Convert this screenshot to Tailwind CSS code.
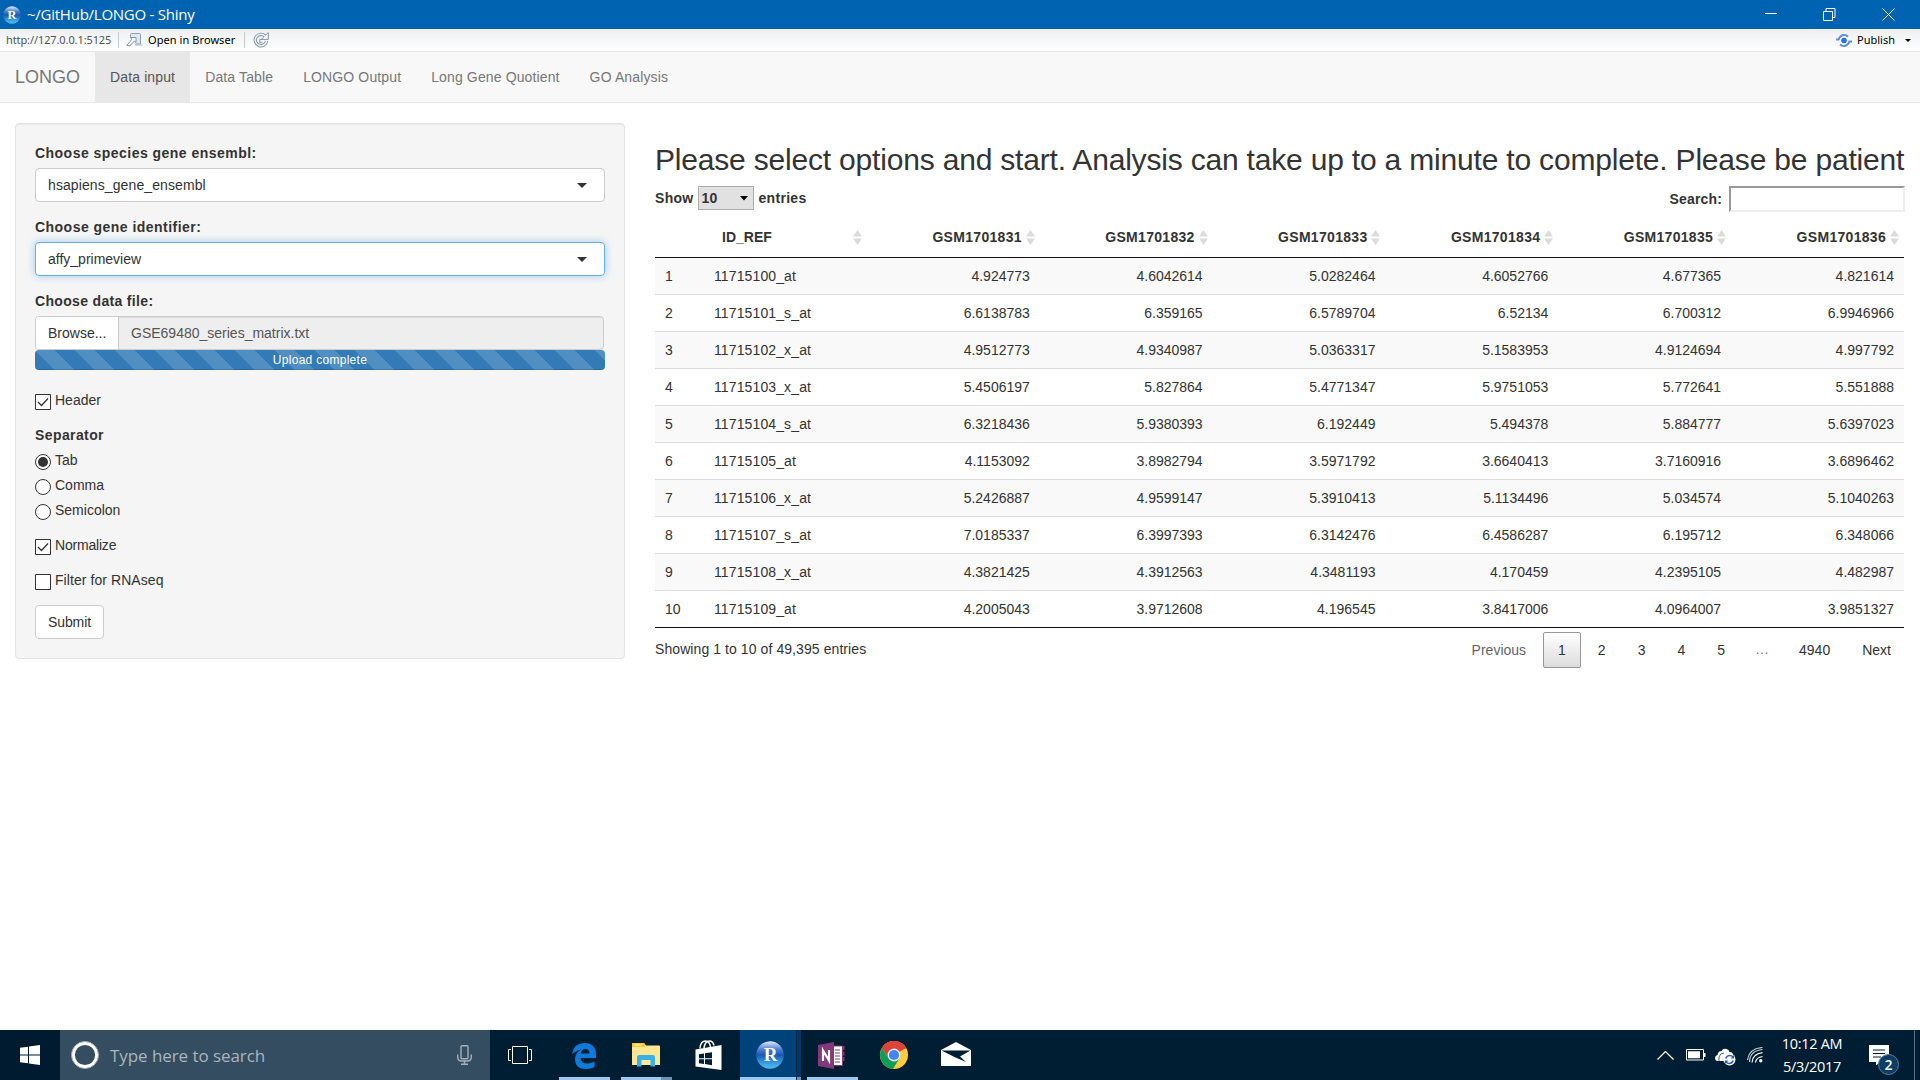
<!DOCTYPE html>
<html lang="en">
<head>
<meta charset="utf-8">
<title>~/GitHub/LONGO - Shiny</title>
<script src="https://cdn.jsdelivr.net/npm/@tailwindcss/browser@4"></script>
</head>
<body class="flex h-screen w-screen flex-col overflow-hidden bg-white font-['Liberation_Sans',Arial,sans-serif] text-sm leading-5 text-[#333]">

<!-- Window title bar -->
<header class="flex h-[29px] shrink-0 items-center bg-[#0063b1] pl-[3px] text-white">
  <svg class="mr-[6px] shrink-0" width="18" height="18" viewBox="0 0 28 28">
    <defs>
      <linearGradient id="ball" x1="0" y1="0" x2="0" y2="1"><stop offset="0" stop-color="#e4ecfa"/><stop offset=".3" stop-color="#4a7fd0"/><stop offset=".5" stop-color="#1a58b4"/><stop offset=".8" stop-color="#3a9fe0"/><stop offset="1" stop-color="#4fc0ee"/></linearGradient>
    </defs>
    <circle cx="14" cy="14" r="13.5" fill="url(#ball)"/>
    <text x="14" y="20.5" text-anchor="middle" font-family="Liberation Serif" font-size="19" font-weight="bold" fill="#fff">R</text>
  </svg>
  <span class="pb-0.5 font-['Open_Sans',sans-serif] text-[15px] tracking-[-0.25px]">~/GitHub/LONGO - Shiny</span>
  <svg class="mr-[25px] ml-auto" width="130" height="13" viewBox="0 0 130 13" fill="none" stroke="#fff">
    <path d="M0 5.500h12M58.500 3.500h9v9h-9zM61 3V.5h9v9h-2.500M117.500.5l12 12M129.500.5l-12 12"/>
  </svg>
</header>

<!-- Viewer toolbar -->
<div class="flex h-[22px] shrink-0 items-center bg-linear-to-b from-[#eeeff2] to-white pl-1.5 font-['Noto_Sans',sans-serif] text-[11px] text-black">
  <span class="w-[104px] text-[11px] tracking-[-0.1px] whitespace-nowrap text-[#555]">http://127.0.0.1:5125</span>
  <i class="ml-2 h-4 w-px bg-[#c9cacc]"></i>
  <svg class="ml-[7px]" width="17" height="14" viewBox="0 0 17 14">
    <path d="M4.500 5V1.500q0-1 1-1h8q1 0 1 1v9.500h-5" fill="#dfe9f4" stroke="#8b9db5"/>
    <path d="M9 11.500h7.500v1H9z" fill="#a9b6c8"/>
    <path d="M5 4.500h5v5L8.300 8l-4.600 5L.8 12.300 5.600 6.700z" fill="#fff" stroke="#8192aa" stroke-linejoin="round"/>
  </svg>
  <span class="ml-[5px] w-[88px] tracking-[0.07px] whitespace-nowrap">Open in Browser</span>
  <i class="ml-2 h-4 w-px bg-[#c9cacc]"></i>
  <svg class="ml-2" width="16" height="16" viewBox="0 0 16 16" fill="none">
    <path d="M12.200 4.200A5.700 5.700 0 1 0 13.600 9" stroke="#8492a8" stroke-width="3.400"/>
    <path d="M15.300 .6v6.800H8.200z" fill="#fff" stroke="#8492a8"/>
    <path d="M12.200 4.200A5.700 5.700 0 1 0 13.600 9" stroke="#eef1f5" stroke-width="1.500"/>
    <path d="M9.500 7.500H6.800v3.200h2.700" stroke="#8492a8"/>
  </svg>
  <svg class="ml-auto" width="16" height="13" viewBox="0 0 16 13" fill="none" stroke="#5c8fd6" stroke-width="2">
    <path d="M0 5.500h2.500Q4.500 1 8 1q2.500 0 4 1.500M16 7.500h-2.500Q11.500 12 8 12q-2.500 0-4-1.500"/>
    <circle cx="8" cy="6.500" r="2.800" fill="#2273e6" stroke="none"/>
  </svg>
  <span class="ml-[5px] w-[38px]">Publish</span>
  <svg class="mr-[9px] ml-[10px]" width="6" height="3" viewBox="0 0 6 3"><path d="M0 0h6L3 3z"/></svg>
</div>

<!-- Navigation bar -->
<nav class="flex h-[52px] shrink-0 border-y border-[#e7e7e7] bg-[#f8f8f8] leading-[50px] tracking-[0.13px] text-[#777]">
  <a class="px-[15px] text-lg leading-[50px] tracking-normal">LONGO</a>
  <a class="bg-[#e7e7e7] px-[15px] text-[#555]">Data input</a>
  <a class="px-[15px]">Data Table</a>
  <a class="px-[15px]">LONGO Output</a>
  <a class="px-[15px]">Long Gene Quotient</a>
  <a class="px-[15px]">GO Analysis</a>
</nav>

<main class="flex min-h-0 flex-1 items-start px-[15px] pt-5">
  <!-- Options panel -->
  <form class="mr-[30px] w-[610px] shrink-0 rounded border border-[#e3e3e3] bg-[#f5f5f5] p-[19px] shadow-[inset_0_1px_1px_rgba(0,0,0,0.05)]">
    <label class="block font-bold tracking-[0.47px]">Choose species gene ensembl:</label>
    <div class="mt-[5px] flex h-[34px] items-center justify-between rounded border border-[#ccc] bg-white pr-[17px] pl-3 tracking-[0.1px]">
      hsapiens_gene_ensembl <svg width="10" height="5" viewBox="0 0 10 5" fill="#333"><path d="M0 0h10L5 5z"/></svg>
    </div>
    <label class="mt-[15px] block font-bold tracking-[0.47px]">Choose gene identifier:</label>
    <div class="mt-[5px] flex h-[34px] items-center justify-between rounded border border-[#66afe9] bg-white pr-[17px] pl-3 shadow-[0_0_8px_rgba(102,175,233,0.6)]">
      affy_primeview <svg width="10" height="5" viewBox="0 0 10 5" fill="#333"><path d="M0 0h10L5 5z"/></svg>
    </div>
    <label class="mt-[15px] block font-bold tracking-[0.33px]">Choose data file:</label>
    <div class="mt-[5px] mr-px flex h-[34px] overflow-hidden rounded border border-[#ccc] bg-[#eee] leading-8">
      <span class="w-[83px] border-r border-[#ccc] bg-white pl-3">Browse...</span>
      <span class="flex-1 pl-3 text-[#555] shadow-[inset_0_1px_1px_rgba(0,0,0,0.075)]">GSE69480_series_matrix.txt</span>
    </div>
    <div class="h-5 rounded bg-[#337ab7] bg-[linear-gradient(45deg,rgba(255,255,255,.15)_25%,transparent_25%,transparent_50%,rgba(255,255,255,.15)_50%,rgba(255,255,255,.15)_75%,transparent_75%,transparent)] bg-[length:40px_40px] text-center text-xs leading-5 tracking-[0.28px] text-white shadow-[inset_0_-1px_0_rgba(0,0,0,0.15)]">Upload complete</div>

    <div class="mt-5 flex h-5 gap-1">
      <svg class="mt-1" width="16" height="16"><path d="M.5.5h15v15H.5z" fill="#fff" stroke="#333"/><path d="M3 8l3.500 3.500L13 4.500" fill="none" stroke="#333" stroke-width="1.300"/></svg>Header
    </div>
    <div class="mt-[15px] font-bold tracking-[0.4px]">Separator</div>
    <div class="mt-[5px] flex flex-col gap-[5px]">
      <div class="flex h-5 gap-1"><svg class="mt-1" width="16" height="16"><circle cx="8" cy="8" r="7.500" fill="#fff" stroke="#333"/><circle cx="8" cy="8" r="5" fill="#333"/></svg>Tab</div>
      <div class="flex h-5 gap-1"><svg class="mt-1" width="16" height="16"><circle cx="8" cy="8" r="7.500" fill="#fff" stroke="#333"/></svg>Comma</div>
      <div class="flex h-5 gap-1"><svg class="mt-1" width="16" height="16"><circle cx="8" cy="8" r="7.500" fill="#fff" stroke="#333"/></svg>Semicolon</div>
    </div>
    <div class="mt-[15px] flex h-5 gap-1 tracking-[-0.2px]">
      <svg class="mt-1" width="16" height="16"><path d="M.5.5h15v15H.5z" fill="#fff" stroke="#333"/><path d="M3 8l3.500 3.500L13 4.500" fill="none" stroke="#333" stroke-width="1.300"/></svg>Normalize
    </div>
    <div class="mt-[15px] flex h-5 gap-1 tracking-[0.07px]">
      <svg class="mt-1" width="16" height="16"><path d="M.5.5h15v15H.5z" fill="#fff" stroke="#333"/></svg>Filter for RNAseq
    </div>
    <button type="button" class="mt-[15px] block h-[34px] w-[69px] rounded border border-[#ccc] bg-white pl-3 text-left tracking-[-0.1px]">Submit</button>
  </form>

  <!-- Results table -->
  <section class="w-[1250px] shrink-0">
    <h2 class="mt-5 mb-2.5 text-[30px] leading-[33px] tracking-[-0.19px] whitespace-nowrap">Please select options and start. Analysis can take up to a minute to complete. Please be patient</h2>
    <div class="flex h-[26px] items-start justify-between font-bold tracking-[0.3px]">
      <div class="flex items-center">
        Show
        <span class="mr-[5px] ml-1 flex h-6 w-14 items-center justify-between border border-[#adadad] bg-[#e1e1e1] pr-[5px] pl-[3px]">10
          <svg width="8" height="5" viewBox="0 0 8 5"><path d="M0 0h8L4 4.500z"/></svg></span>
        entries
      </div>
      <div class="flex items-center gap-[7px] tracking-[0.15px]">Search:
        <span class="h-[26px] w-[176px] border-2 border-t-[#999] border-r-[#eee] border-b-[#eee] border-l-[#999] bg-white"></span>
      </div>
    </div>
    <table class="w-[1249px] table-fixed border-separate border-spacing-0 border-b border-[#111]">
      <colgroup><col class="w-[49px]"><col class="w-[163px]"><col><col><col><col><col><col></colgroup>
      <thead><tr id="head" class="h-[46px] font-bold [&>th]:border-b [&>th]:border-[#111]"></tr></thead>
      <tbody id="rows"></tbody>
    </table>
    <div class="flex justify-between">
      <div class="pt-[11px] tracking-[0.08px]">Showing 1 to 10 of 49,395 entries</div>
      <div class="flex gap-0.5 pt-1 leading-[34px]">
        <span class="border border-transparent px-3.5 text-[#666]">Previous</span>
        <span class="rounded-[2px] border border-[#979797] bg-linear-to-b from-white to-[#dcdcdc] px-3.5">1</span>
        <span class="border border-transparent px-3.5">2</span>
        <span class="border border-transparent px-3.5">3</span>
        <span class="border border-transparent px-3.5">4</span>
        <span class="border border-transparent px-3.5">5</span>
        <span class="px-[13px] text-[#5f7a99]">…</span>
        <span class="border border-transparent px-3.5">4940</span>
        <span class="border border-transparent pr-[13px] pl-3.5">Next</span>
      </div>
    </div>
  </section>
</main>

<!-- Taskbar -->
<footer class="flex h-[50px] shrink-0 bg-[#001e33] font-['Open_Sans',sans-serif] text-white">
  <div class="flex w-[60px] items-center justify-center bg-[#001b2f]">
    <svg width="20" height="20" viewBox="0 0 20 20" fill="#fff"><path d="M0 2.800l8-1.100v7.700H0zM9 1.500L20 0v9.400H9zM0 10.500h8v7.800l-8-1.100zM9 10.500h11V20L9 18.500z"/></svg>
  </div>
  <div class="flex w-[430px] items-center bg-[#354d60] pl-[11px]">
    <svg width="28" height="28" viewBox="0 0 28 28"><circle cx="14" cy="14" r="11.800" fill="none" stroke="#fff" stroke-width="3.400"/><circle cx="14" cy="14" r="13.500" fill="none" stroke="#9aa7b1"/></svg>
    <span class="ml-[11px] pt-0.5 text-[17px] tracking-[-0.07px] text-[#aab5be]">Type here to search</span>
    <svg class="mr-[18px] ml-auto" width="15" height="20" viewBox="0 0 15 20" fill="none" stroke="#a4b0ba" stroke-width="1.400"><rect x="4" y=".7" width="7" height="13" rx="1"/><path d="M.7 9.500v2.500q0 4 4 4h5.600q4 0 4-4V9.500M7.500 16v3.300M4 19.300h7"/></svg>
  </div>
  <div class="flex w-[63px] items-center justify-center pr-[3px]">
    <svg width="24" height="19" viewBox="0 0 24 19" fill="none" stroke="#fff"><path d="M4.500.5h15v17h-15zM3 3.500H.5v11H3M21 3.500h2.500v11H21"/></svg>
  </div>
  <div class="flex w-[62px] flex-col items-center">
    <svg class="mt-3" width="26" height="27" viewBox="0 0 26 27"><path d="M1 12Q3 1 13.500 1 25 1 25 13v3H9.500q.5 5.500 7 5.500 4 0 7-2v5.500q-3.500 2-8.500 2Q4 27 4 17q0-6.500 6.500-9.500-5 .8-9.500 4.500zM9.800 11.500h8.700q0-4.500-4.200-4.500-3.800 0-4.500 4.500z" fill="#0e7ad9"/></svg>
    <i class="mt-auto h-[3px] w-[51px] bg-[#9cc8f0]"></i>
  </div>
  <div class="flex w-[62px] flex-col items-center">
    <svg class="mt-[13px]" width="28" height="24" viewBox="0 0 28 24"><path d="M0 1q0-1 1-1h11l2 2.500h13q1 0 1 1V22H0z" fill="#ffe793"/><path d="M0 1q0-1 1-1h11l1.500 2.500L12 4H0z" fill="#ffc928"/><path d="M2.500 1.500h7v1h-7z" fill="#fff"/><path d="M5 23.500V14q0-2 2-2h14q2 0 2 2v9.500h-4.500V17h-9v6.500z" fill="#3bb0e6"/></svg>
    <span class="mt-auto flex"><i class="h-[3px] w-10 bg-[#9cc8f0]"></i><i class="h-[3px] w-[11px] bg-[#7292b3]"></i></span>
  </div>
  <div class="flex w-[62px] flex-col items-center">
    <svg class="mt-[10px]" width="27" height="30" viewBox="0 0 27 30"><path d="M5 8.500Q5.500 1 10.500 1q4 0 5 6M9 8q1-7 5.500-7Q18 1 19 5.500" fill="none" stroke="#fff" stroke-width="1.500"/><path d="M.5 9.500L26.500 5v25L.5 26.500z" fill="#fff"/><path d="M4 14.300l5-.8v4.800H4zM10 13.300l7-1.100v6.100h-7zM4 19.200h5V24l-5-.7zM10 19.200h7v6l-7-1.100z" fill="#001e33"/></svg>
  </div>
  <div class="flex w-[62px] items-stretch pl-[1px]">
    <div class="flex w-[56px] flex-col items-center bg-[#00427a]">
      <svg class="mt-[11px] ml-[3px]" width="28" height="28" viewBox="0 0 28 28"><circle cx="14" cy="14" r="13.800" fill="url(#ball)"/><text x="14.500" y="20" text-anchor="middle" font-family="Liberation Serif" font-size="19" font-weight="bold" fill="#fff">R</text></svg>
      <i class="mt-auto h-[3px] w-full bg-[#9cc8f0]"></i>
    </div>
    <div class="flex w-[5px] flex-col justify-end border-l border-[#002544] bg-[#003764]"><i class="h-[3px] bg-[#7292b3]"></i></div>
  </div>
  <div class="flex w-[62px] flex-col items-center">
    <svg class="mt-[12px]" width="28" height="27" viewBox="0 0 28 27"><path d="M14 4h10.500v19.500H14z" fill="#fff" stroke="#80397b"/><path d="M17 8h5M17 11h5M17 14h5M17 17h5M17 20h5" stroke="#80397b"/><path d="M24 4h2.500v4H24zM24 9.500h2.500v4H24zM24 15h2.500v4H24z" fill="#80397b"/><path d="M0 3l16-3v27L0 24z" fill="#80397b"/><path d="M5 19V8.500l6 10V8" fill="none" stroke="#fff" stroke-width="2.200"/></svg>
    <i class="mt-auto h-[3px] w-[51px] bg-[#9cc8f0]"></i>
  </div>
  <div class="flex w-[62px] flex-col items-center">
    <svg class="mt-[11px]" width="28" height="28" viewBox="0 0 28 28"><circle cx="14" cy="14" r="14" fill="#ffcd40"/><path d="M14 14L1.900 7A14 14 0 0 1 26.100 7z" fill="#db4437"/><path d="M14 7.600h12.400A14 14 0 0 0 1.900 7L8.500 17.200z" fill="#db4437"/><path d="M1.900 7A14 14 0 0 0 13 28l6.500-10.800-11 0z" fill="#0f9d58"/><circle cx="14" cy="14" r="6.400" fill="#f1f1f1"/><circle cx="14" cy="14" r="5.100" fill="#4285f4"/></svg>
  </div>
  <div class="flex w-[62px] flex-col items-center">
    <svg class="mt-[12px]" width="30" height="24" viewBox="0 0 30 24"><path d="M0 8L15 0l15 8v16H0z" fill="#fff"/><path d="M.5 8.500h29L19 14.500l6 5.500-11.500-5z" fill="#001e33"/></svg>
  </div>

  <!-- System tray -->
  <div class="ml-auto flex items-center">
    <svg width="17" height="9" viewBox="0 0 17 9" fill="none" stroke="#fff" stroke-width="1.300"><path d="M.5 8.500l8-8 8 8"/></svg>
    <svg class="ml-[12px]" width="20" height="12" viewBox="0 0 20 12"><path d="M.5.5h17v10.500H.5z" fill="none" stroke="#fff"/><path d="M2 2.300h12v7H2zM18 4h1.500v4H18z" fill="#fff"/></svg>
    <svg class="mt-1 ml-[9px]" width="22" height="18" viewBox="0 0 22 18"><path d="M3 13q-3 0-3-3 0-2.500 2.500-3Q3 3 6.500 3 8 0 11.500 1q2.500.5 3 3 4 0 4 4.500V13z" fill="#fff"/><path d="M4 13V9q1-4 5-4" stroke="#001e33" fill="none" stroke-width=".7"/><circle cx="14.500" cy="11.500" r="6" fill="#fff"/><path d="M10.800 10.500q1-3 4-3 2 0 3.200 1.500M18.200 12.500q-1 3-4 3-2 0-3.200-1.500" stroke="#2a62c9" fill="none" stroke-width="1.500"/><path d="M19 7v3.500h-3.500zM10 16v-3.500h3.500z" fill="#2a62c9"/></svg>
    <svg class="ml-[10px]" width="17" height="16" viewBox="0 0 17 16" fill="none" stroke="#fff" stroke-width="1.200"><path d="M8.500 15.500Q9 10.500 15.500 9.500M5 15.500Q5.500 7 15.500 5.700" /><path d="M2.500 15Q2.500 4 15.500 2.500M.5 13Q2 1.500 15.500.5" stroke="#c4ccd3"/><circle cx="13.800" cy="13.800" r="1.700" fill="#fff" stroke="none"/></svg>
    <div class="ml-[17px] w-[62px] text-center text-[14.5px] leading-[23px] tracking-[-0.28px] whitespace-nowrap"><div>10:12 AM</div><div>5/3/2017</div></div>
    <div class="relative mr-[25px] ml-[26px] h-[20px] w-[20px]">
      <svg width="20" height="20" viewBox="0 0 20 20"><path d="M0 0h20v17h-9l-4 3.500V17H0z" fill="#fff"/><path d="M4 5h12M4 8.500h12M4 12h8" stroke="#001e33"/></svg>
      <span class="absolute top-[9px] left-[9px] flex h-[21px] w-[21px] items-center justify-center rounded-full border border-[#5a7f9e] bg-[#0b3d66] text-sm font-semibold">2</span>
    </div>
    <i class="mr-[5px] h-[50px] w-px bg-[#5f7282]"></i>
  </div>
</footer>

<script>
const data = [
  ['11715100_at','4.924773','4.6042614','5.0282464','4.6052766','4.677365','4.821614'],
  ['11715101_s_at','6.6138783','6.359165','6.5789704','6.52134','6.700312','6.9946966'],
  ['11715102_x_at','4.9512773','4.9340987','5.0363317','5.1583953','4.9124694','4.997792'],
  ['11715103_x_at','5.4506197','5.827864','5.4771347','5.9751053','5.772641','5.551888'],
  ['11715104_s_at','6.3218436','5.9380393','6.192449','5.494378','5.884777','5.6397023'],
  ['11715105_at','4.1153092','3.8982794','3.5971792','3.6640413','3.7160916','3.6896462'],
  ['11715106_x_at','5.2426887','4.9599147','5.3910413','5.1134496','5.034574','5.1040263'],
  ['11715107_s_at','7.0185337','6.3997393','6.3142476','6.4586287','6.195712','6.348066'],
  ['11715108_x_at','4.3821425','4.3912563','4.3481193','4.170459','4.2395105','4.482987'],
  ['11715109_at','4.2005043','3.9712608','4.196545','3.8417006','4.0964007','3.9851327']
];
const sort = '<svg class="shrink-0" width="9" height="15" viewBox="0 0 9 15" fill="#dcdcdc"><path d="M4.500 0L9 6.500H0zM0 8.500h9L4.500 15z"/></svg>';
document.getElementById('head').innerHTML = '<th></th>' +
  '<th class="p-0"><div class="flex items-center justify-between pt-[5px] pr-[5px] pl-[18px]">ID_REF' + sort + '</div></th>' +
  [1,2,3,4,5,6].map(n => '<th class="p-0"><div class="flex items-center justify-end gap-[4px] pt-[5px] pr-[5px] tracking-[0.3px]">GSM170183' + n + sort + '</div></th>').join('');
document.getElementById('rows').innerHTML = data.map((r, i) =>
  '<tr class="h-[37px] odd:bg-[#f9f9f9] first:h-9 not-first:[&>td]:border-t not-first:[&>td]:border-[#ddd]"><td class="pl-2.5">' + (i + 1) + '</td><td class="pl-2.5 tracking-[0.12px]">' + r[0] + '</td>' +
  r.slice(1).map(v => '<td class="pr-2.5 text-right">' + v + '</td>').join('') + '</tr>').join('');
</script>
</body>
</html>
